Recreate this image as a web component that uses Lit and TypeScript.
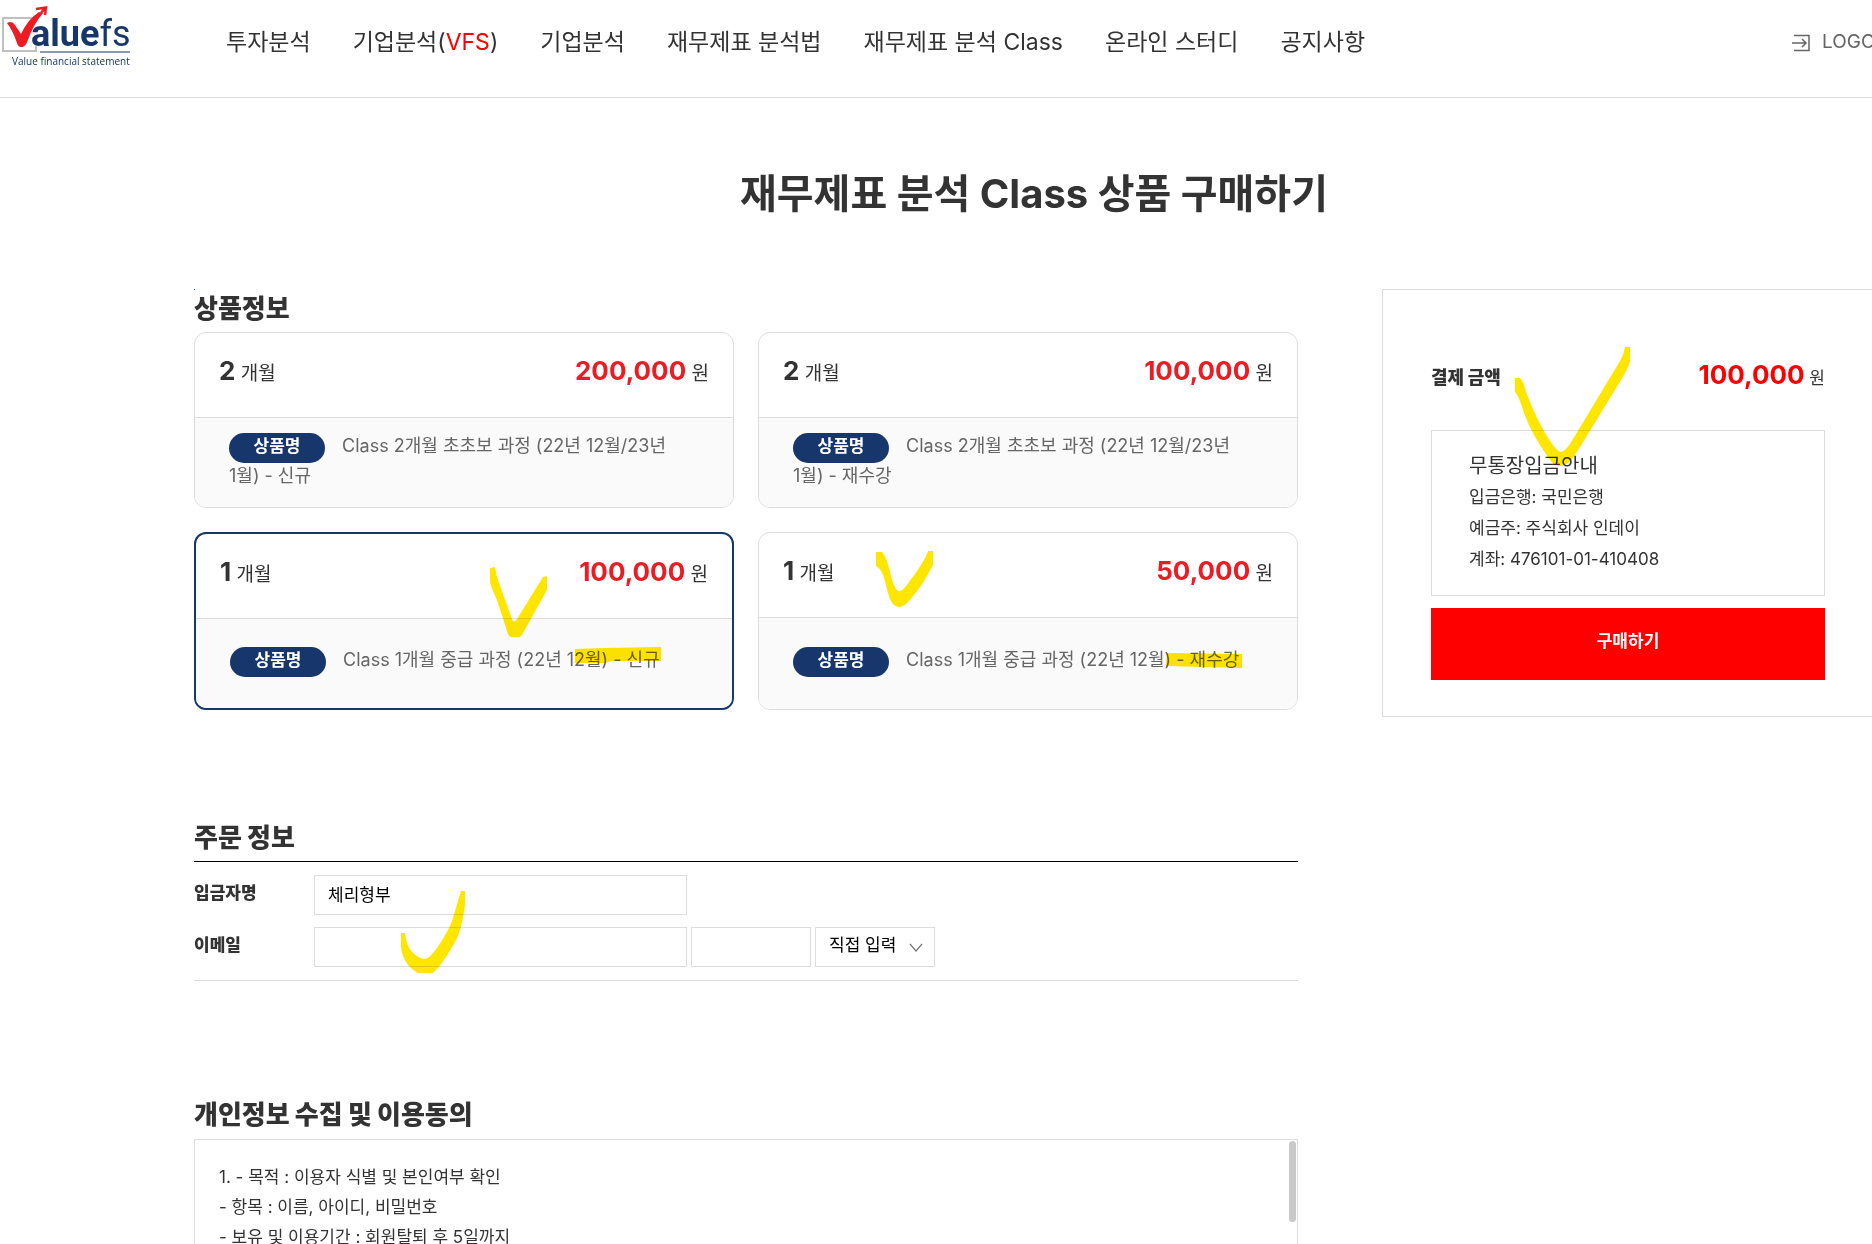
import { LitElement, html, css, svg } from "lit";
import { customElement, state } from "lit/decorators.js";
import { classMap } from "lit/directives/class-map.js";

interface Product {
  id: string;
  months: number;
  price: string;
  name: string;
}

const PRODUCTS: Product[] = [
  { id: "p1", months: 2, price: "200,000", name: "Class 2개월 초초보 과정 (22년 12월/23년 1월) - 신규" },
  { id: "p2", months: 2, price: "100,000", name: "Class 2개월 초초보 과정 (22년 12월/23년 1월) - 재수강" },
  { id: "p3", months: 1, price: "100,000", name: "Class 1개월 중급 과정 (22년 12월) - 신규" },
  { id: "p4", months: 1, price: "50,000", name: "Class 1개월 중급 과정 (22년 12월) - 재수강" },
];

/* Highlighter strokes drawn over the page, in page coordinates. */
const MARKS = [
  "M490 568L495 567Q496 575 499 583L512 619Q514 624 517 619L543 577L547 576V590L523 633Q521 637 519 637H511Q509 637 508 634L497 600Q490 585 490 582Z",
  "M575 649L605 648L661 647V661H612L605 663H575Z",
  "M876 552L882 552Q886 556 889 568Q894 591 899 591Q903 591 909 582Q925 561 928 551H933V565Q922 586 914 595Q906 606 900 607Q894 607 891 601Q888 595 885 581Q882 569 876 566Z",
  "M1167 653L1242 654V668L1166 666Z",
  "M1515 378H1520Q1523 380 1526 392Q1537 422 1552 444Q1558 452 1561 452Q1564 452 1570 444L1620 361Q1624 354 1625 347H1630V361Q1628 369 1621 380L1577 452Q1570 463 1565 465Q1559 467 1554 465L1548 457Q1532 435 1524 413Q1519 396 1515 392Z",
  "M401 933H405Q406 945 412 952Q419 959 425 959Q429 959 437 948Q450 929 453 918Q457 904 461 891H465V905Q461 935 452 947Q442 965 433 973H418Q407 967 403 956Q401 951 401 946Z",
];

@customElement("app-root")
export class AppRoot extends LitElement {
  @state() private selected = "p3";

  static styles = css`
    :host {
      display: block;
      position: relative;
      height: 100vh;
      overflow: hidden;
      background: #fff;
      color: #333;
      font: 400 17px/30px Inter, "Noto Sans CJK KR", sans-serif;
      word-break: keep-all;
    }
    * { box-sizing: border-box; }
    h1, h2, h3, p, ul { margin: 0; padding: 0; }
    a { color: inherit; text-decoration: none; }
    .page { display: flex; flex-direction: column; height: 100%; }
    .header {
      display: flex;
      flex: none;
      height: 98px;
      border-bottom: 1px solid #ddd;
    }
    .logo { display: block; flex: none; width: 132px; height: 70px; }
    .logo svg { display: block; }
    .nav { padding: 22px 0 0 94px; }
    .nav ul {
      display: flex;
      gap: 42px;
      list-style: none;
      font-size: 23px;
      line-height: 40px;
      white-space: nowrap;
    }
    .red { color: #f00; }
    .logout {
      display: flex;
      flex: none;
      gap: 12px;
      width: 80px;
      margin-left: auto;
      padding-top: 27px;
      color: #666;
      font-size: 19px;
      line-height: 30px;
      white-space: nowrap;
    }
    .logout svg { flex: none; margin-top: 7px; }
    .body {
      display: flex;
      flex: 1;
      flex-direction: column;
      min-height: 0;
      margin: 0 -2px 0 194px;
    }
    .title {
      padding: 66px 0;
      text-align: center;
      font-size: 40px;
      line-height: 59px;
      font-weight: 700;
    }
    .columns {
      display: grid;
      grid-template-columns: minmax(0, 1fr) 492px;
      gap: 84px;
      flex: 1;
      min-height: 0;
      align-items: start;
    }
    .main { display: flex; flex-direction: column; height: 100%; }
    .heading { font-size: 26px; line-height: 37px; font-weight: 900; }
    .dot { display: block; width: 1px; height: 1px; background: #337ab7; }
    .products {
      display: grid;
      grid-template-columns: 1fr 1fr;
      grid-template-rows: 176px 178px;
      gap: 24px;
      padding-top: 5px;
    }
    .card {
      position: relative;
      display: flex;
      flex-direction: column;
      border: 1px solid #ddd;
      border-radius: 12px;
      overflow: hidden;
      cursor: pointer;
    }
    .card.on { border: 2px solid #17366b; }
    .card input { position: absolute; opacity: 0; margin: 0; }
    .card-top {
      display: flex;
      flex: none;
      justify-content: space-between;
      align-items: baseline;
      height: 85px;
      padding: 18px 24px 0;
      border-bottom: 1px solid #ddd;
      font-size: 19px;
      line-height: 40px;
    }
    .num { font-size: 26px; font-weight: 700; }
    .price { color: #ed1c24; }
    .card-name {
      display: flex;
      flex: 1;
      align-items: center;
      padding: 0 56px 4px 34px;
      background: #fafafa;
      color: #666;
      font-size: 18px;
    }
    .card-name p { line-height: 26px; }
    .pill {
      display: inline-block;
      width: 96px;
      height: 30px;
      margin-right: 12px;
      border-radius: 15px;
      background: #17366b;
      color: #fff;
      text-align: center;
      font-size: 17px;
      font-weight: 600;
      vertical-align: top;
    }
    .order { padding-top: 109px; }
    .fields {
      display: flex;
      flex-direction: column;
      gap: 12px;
      margin-top: 5px;
      padding: 13px 0;
      border-top: 1px solid #000;
      border-bottom: 1px solid #ddd;
    }
    .field { display: flex; gap: 4px; }
    .field label { width: 116px; line-height: 36px; font-weight: 900; }
    .box {
      height: 40px;
      padding: 0 13px 4px;
      border: 1px solid #ddd;
      border-radius: 0;
      background: #fff;
      color: #000;
      font: inherit;
      outline: 0;
    }
    .wide { width: 373px; }
    .narrow { width: 120px; }
    .select { position: relative; display: flex; }
    .select select { appearance: none; }
    .select svg { position: absolute; right: 12px; top: 16px; pointer-events: none; }
    .privacy { display: flex; flex: 1; flex-direction: column; min-height: 0; padding-top: 115px; }
    .terms {
      position: relative;
      flex: 1;
      min-height: 0;
      margin-top: 6px;
      padding: 22px 24px 0;
      border: 1px solid #ddd;
      border-bottom: 0;
      overflow: hidden;
    }
    .thumb {
      position: absolute;
      top: 1px;
      right: 1px;
      width: 7px;
      height: 81px;
      border-radius: 4px;
      background: #c9c9c9;
    }
    .pay { padding: 65px 48px 36px; border: 1px solid #ddd; }
    .total { display: flex; justify-content: space-between; align-items: baseline; height: 40px; line-height: 40px; }
    .total h3 { font-size: 18px; font-weight: 900; }
    .total .num { color: #f00; }
    .bank { margin-top: 35px; padding: 20px 37px; border: 1px solid #ddd; line-height: 31px; }
    .bank h3 { font-size: 20px; font-weight: 400; }
    .buy {
      display: block;
      width: 100%;
      height: 72px;
      margin-top: 12px;
      padding: 0 0 6px;
      border: 0;
      background: #f00;
      color: #fff;
      font: inherit;
      font-weight: 600;
      cursor: pointer;
    }
    .marks {
      position: absolute;
      left: 0;
      top: 0;
      mix-blend-mode: multiply;
      pointer-events: none;
    }
    .logo-main { font: 700 36px Roboto, sans-serif; fill: #17366b; }
    .logo-light { font-weight: 400; }
    .logo-sub { font: 400 10px "Open Sans", sans-serif; fill: #17366b; }
  `;

  private logo() {
    return html`<a class="logo" href="#" aria-label="Valuefs">
      <svg width="132" height="70" viewBox="0 0 132 70">
        <path d="M34 18H3V51H36V46" fill="none" stroke="#bfc0c2" stroke-width="2" />
        <text class="logo-main" x="31" y="46">alue<tspan class="logo-light">fs</tspan></text>
        <path d="M7 23Q12 20 15 25L21 34Q28 19 39 12L43 13Q33 25 28 40Q25 48 21 47Q18 47 17 43Q13 31 7 23Z" fill="#ed1c24" />
        <path d="M36 9L46 7.500L45 15M41 13L45 8" fill="none" stroke="#ed1c24" stroke-width="2.500" />
        <path d="M40 52H130" stroke="#17366b" stroke-width="1" />
        <text class="logo-sub" x="12" y="65">Value financial statement</text>
      </svg>
    </a>`;
  }

  private card(p: Product) {
    const on = p.id === this.selected;
    return html`<label class=${classMap({ card: true, on })}>
      <input type="radio" name="product" .checked=${on} @change=${() => (this.selected = p.id)} />
      <span class="card-top">
        <span><b class="num">${p.months}</b> 개월</span>
        <span><b class="num price">${p.price}</b> 원</span>
      </span>
      <span class="card-name"><p><span class="pill">상품명</span> ${p.name}</p></span>
    </label>`;
  }

  render() {
    return html`
      <div class="page">
        <header class="header">
          ${this.logo()}
          <nav class="nav">
            <ul>
              <li><a href="#">투자분석</a></li>
              <li><a href="#">기업분석(<span class="red">VFS</span>)</a></li>
              <li><a href="#">기업분석</a></li>
              <li><a href="#">재무제표 분석법</a></li>
              <li><a href="#">재무제표 분석 Class</a></li>
              <li><a href="#">온라인 스터디</a></li>
              <li><a href="#">공지사항</a></li>
            </ul>
          </nav>
          <a class="logout" href="#">
            <svg width="18" height="18" viewBox="0 0 18 18" fill="none" stroke="#666" stroke-width="1.5">
              <path d="M2 1.5H17V16.5H2" />
              <path d="M0 9H13M10 5L14 9L10 13" />
            </svg>
            LOGOUT
          </a>
        </header>
        <div class="body">
          <h1 class="title">재무제표 분석 Class 상품 구매하기</h1>
          <div class="columns">
            <main class="main">
              <section>
                <span class="dot"></span>
                <h2 class="heading">상품정보</h2>
                <div class="products">${PRODUCTS.map((p) => this.card(p))}</div>
              </section>
              <section class="order">
                <h2 class="heading">주문 정보</h2>
                <div class="fields">
                  <div class="field">
                    <label for="payer">입금자명</label>
                    <input class="box wide" id="payer" type="text" value="체리형부" />
                  </div>
                  <div class="field">
                    <label for="email">이메일</label>
                    <input class="box wide" id="email" type="text" />
                    <input class="box narrow" type="text" aria-label="이메일 도메인" />
                    <span class="select">
                      <select class="box narrow" aria-label="도메인 선택">
                        <option>직접 입력</option>
                      </select>
                      <svg width="14" height="10" viewBox="0 0 14 10" fill="none" stroke="#777" stroke-width="1.2">
                        <path d="M1 1L7 8L13 1" />
                      </svg>
                    </span>
                  </div>
                </div>
              </section>
              <section class="privacy">
                <h2 class="heading">개인정보 수집 및 이용동의</h2>
                <div class="terms">
                  <p>1. - 목적 : 이용자 식별 및 본인여부 확인</p>
                  <p>- 항목 : 이름, 아이디, 비밀번호</p>
                  <p>- 보유 및 이용기간 : 회원탈퇴 후 5일까지</p>
                  <span class="thumb"></span>
                </div>
              </section>
            </main>
            <aside class="pay">
              <div class="total">
                <h3>결제 금액</h3>
                <span><b class="num">100,000</b> 원</span>
              </div>
              <div class="bank">
                <h3>무통장입금안내</h3>
                <p>입금은행: 국민은행</p>
                <p>예금주: 주식회사 인데이</p>
                <p>계좌: 476101-01-410408</p>
              </div>
              <button class="buy" type="button">구매하기</button>
            </aside>
          </div>
        </div>
      </div>
      <svg class="marks" width="1872" height="1244" viewBox="0 0 1872 1244" fill="#ffe600" aria-hidden="true">
        ${MARKS.map((d) => svg`<path d=${d} />`)}
      </svg>
    `;
  }
}
